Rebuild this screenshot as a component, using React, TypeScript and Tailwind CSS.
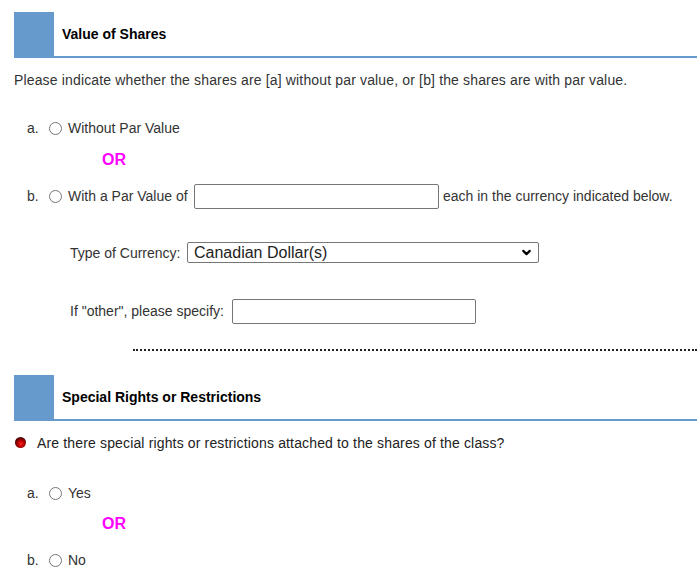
import { ChevronDown } from "lucide-react"

function SectionHeader({ title }: { title: string }) {
	return (
		<div className="ml-[14px] flex h-[46px] border-b-2 border-[#6699cc]">
			<div className="w-[40px] bg-[#6699cc]" />
			<div className="flex items-center pl-[8px] text-[14px] font-bold text-black">
				{title}
			</div>
		</div>
	)
}

function Radio() {
	return (
		<span className="inline-block h-[13px] w-[13px] shrink-0 rounded-full border border-[#767676] bg-white" />
	)
}

function Or() {
	return (
		<span className="pl-[102px] text-[16px] font-bold text-[#ff00ff]">OR</span>
	)
}

export default function App() {
	return (
		<div className="min-h-screen bg-white font-['Liberation_Sans',Arial,sans-serif] text-[14px] text-[#333]">
			<div className="h-[12px]" />
			<SectionHeader title="Value of Shares" />

			{/* Intro */}
			<div className="flex h-[44px] items-center whitespace-nowrap pl-[14px] tracking-[0.15px]">
				Please indicate whether the shares are [a] without par value, or [b] the
				shares are with par value.
			</div>

			{/* a. */}
			<div className="flex h-[52px] items-center pl-[14px]">
				<span className="w-[35px] pl-[13px]">a.</span>
				<Radio />
				<span className="ml-[6px]">Without Par Value</span>
			</div>

			<div className="flex h-[12px] items-center">
				<Or />
			</div>

			{/* b. */}
			<div className="flex h-[60px] items-center whitespace-nowrap pl-[14px]">
				<span className="w-[35px] pl-[13px]">b.</span>
				<Radio />
				<span className="ml-[6px] w-[126px]">With a Par Value of</span>
				<input
					type="text"
					className="h-[25px] w-[245px] rounded-[2px] border border-[#767676] bg-white px-1"
				/>
				<span className="ml-[4px]">each in the currency indicated below.</span>
			</div>

			{/* Currency */}
			<div className="flex h-[54px] items-center pl-[70px]">
				<span className="w-[117px]">Type of Currency:</span>
				<div className="relative">
					<select className="h-[21px] w-[352px] appearance-none rounded-[2px] border border-[#767676] bg-white pl-[6px] text-[16px] leading-[19px] text-[#222]">
						<option>Canadian Dollar(s)</option>
					</select>
					<ChevronDown
						className="pointer-events-none absolute right-[6px] top-[4px] h-[13px] w-[13px] text-black"
						strokeWidth={4}
					/>
				</div>
			</div>

			{/* Other */}
			<div className="flex h-[63px] items-center pl-[70px]">
				<span className="w-[162px]">If "other", please specify:</span>
				<input
					type="text"
					className="h-[25px] w-[244px] rounded-[2px] border border-[#767676] bg-white px-1"
				/>
			</div>

			<div className="ml-[133px] mt-[6px] border-t-2 border-dotted border-[#222]" />

			<div className="h-[24px]" />
			<SectionHeader title="Special Rights or Restrictions" />

			{/* Question */}
			<div className="flex h-[44px] items-center whitespace-nowrap pl-[15px]">
				<span className="mb-[2px] h-[11px] w-[11px] rounded-full bg-[radial-gradient(circle_at_55%_62%,#ff2020_0%,#b80000_35%,#3a0000_75%,#100000_100%)]" />
				<span className="ml-[11px] tracking-[0.15px] text-[#222]">
					Are there special rights or restrictions attached to the shares of the
					class?
				</span>
			</div>

			<div className="h-[8px]" />
			<div className="flex h-[40px] items-center pl-[14px]">
				<span className="w-[35px] pl-[13px]">a.</span>
				<Radio />
				<span className="ml-[6px]">Yes</span>
			</div>

			<div className="flex h-[22px] items-center">
				<Or />
			</div>

			<div className="flex h-[50px] items-center pl-[14px]">
				<span className="w-[35px] pl-[13px]">b.</span>
				<Radio />
				<span className="ml-[6px]">No</span>
			</div>
		</div>
	)
}
